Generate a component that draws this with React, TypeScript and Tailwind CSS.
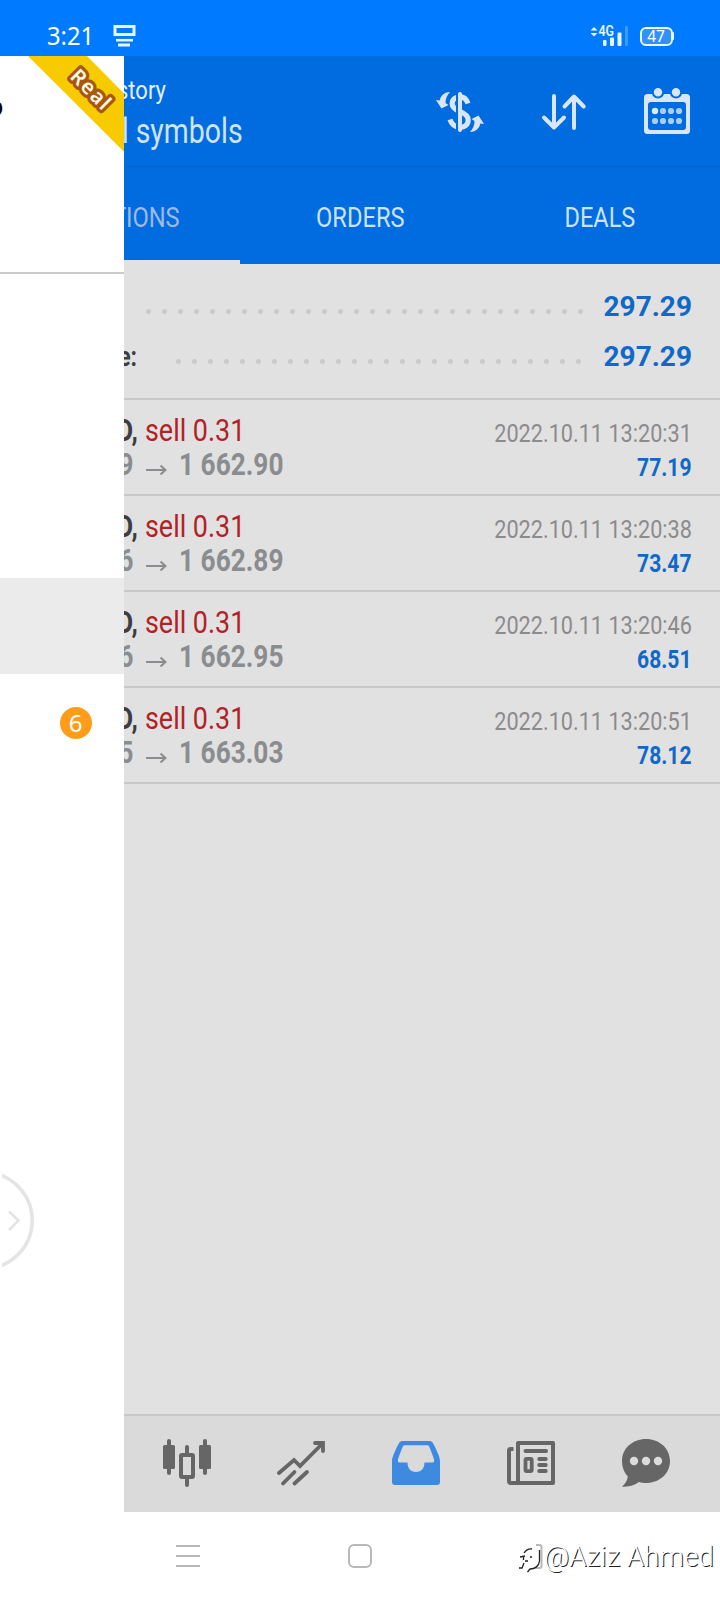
import React from "react";
import clsx from "clsx";

const deals = [
  { id: 1, open: "9", close: "1 662.90", time: "2022.10.11 13:20:31", profit: "77.19" },
  { id: 2, open: "6", close: "1 662.89", time: "2022.10.11 13:20:38", profit: "73.47" },
  { id: 3, open: "6", close: "1 662.95", time: "2022.10.11 13:20:46", profit: "68.51" },
  { id: 4, open: "5", close: "1 663.03", time: "2022.10.11 13:20:51", profit: "78.12" },
];

function StatusBar() {
  return (
    <header className="flex h-14 items-start bg-[#007aff] pt-[23px] pr-[46px] pl-[47px] text-white">
      <span className="h-6 w-[66px] origin-left scale-x-[0.95] font-['Noto_Sans'] text-[25px] leading-[25px] whitespace-nowrap">
        3:21
      </span>
      <svg className="mt-0.5 h-[22px] w-[23px]" viewBox="0 0 23 22" fill="none" stroke="#e8f4ff">
        <rect x="2" y="1.5" width="19" height="8" strokeWidth="3" />
        <path d="M3 15.2H20" strokeWidth="2.6" />
        <path d="M5 20H17" strokeWidth="3" />
      </svg>
      <div className="ml-auto flex items-start">
        <svg className="h-6 w-10" viewBox="0 0 40 24" fill="#e8f4ff">
          <path d="M2.5 7.5L6 4L9.5 7.5Z" />
          <path d="M2.5 10L6 13.5L9.5 10Z" />
          <text x="10.5" y="13" fontFamily="Roboto" fontWeight="600" fontSize="14" textLength="15.5" lengthAdjust="spacingAndGlyphs">
            4G
          </text>
          <rect x="15" y="17" width="3.5" height="6" rx="1" />
          <rect x="22" y="14.5" width="4" height="8.5" rx="1" />
          <rect x="29.5" y="9.5" width="4" height="13.5" rx="1" />
          <rect x="37" y="3" width="3" height="20" rx="1" fill="#3d9bff" />
        </svg>
        <div className="mt-[3.5px] ml-3 flex h-[19px] w-[33px] items-center justify-center rounded-[6px] border-2 border-[#e8f8ff] bg-[#3390f8] pt-px font-['Noto_Sans'] text-[15.5px] leading-none">
          47
        </div>
        <div className="mt-[9px] h-2 w-[1.5px] rounded-r bg-[#e8f8ff]" />
      </div>
    </header>
  );
}

function Drawer() {
  return (
    <aside className="relative w-[124px] shrink-0 overflow-hidden bg-white">
      <div className="relative h-[218px] border-b-2 border-[#cbcbcb]">
        <svg className="absolute top-0 left-0 h-[100px] w-[124px]" viewBox="0 0 124 100">
          <path d="M28 0H87L124 37.5V95.7Z" fill="#f7cb00" />
          <text
            x="91.5"
            y="41"
            transform="rotate(45 91.5 33.5)"
            textAnchor="middle"
            fontFamily="Noto Sans"
            fontSize="20.5"
            fontWeight="600"
            letterSpacing="1.5"
            fill="#fff8e6"
            stroke="#a9570b"
            strokeWidth="6.5"
            strokeLinejoin="round"
            paintOrder="stroke"
          >
            Real
          </text>
        </svg>
        <div className="flex w-[3px] justify-end overflow-hidden pt-[35px] text-[27px] leading-8 font-bold text-black">
          <span>o</span>
        </div>
      </div>
      <div className="mt-[304px] h-24 bg-[#ebebeb]" />
      <div className="flex h-24 items-center justify-end pt-0.5 pr-8">
        <span className="flex size-8 items-center justify-center rounded-full bg-[#ff9d1a] pr-px font-['Noto_Sans'] text-[24px] leading-none text-white">
          6
        </span>
      </div>
      <svg className="mt-[400px] ml-0.5 h-[100px] w-9" viewBox="2 1170 36 100" fill="none" stroke="#e4e4e4">
        <circle cx="-16" cy="1220.5" r="48.2" strokeWidth="3.6" />
        <path d="M9 1211.5L18.5 1220.5L9 1230" strokeWidth="2.6" />
      </svg>
    </aside>
  );
}

function ActionIcons() {
  return (
    <div className="ml-auto flex pt-8 text-[#d9e6f7]">
      <svg className="h-12 w-12" viewBox="0 0 48 48" fill="none" stroke="currentColor">
        <path
          d="M32 15.5C30.5 11 28 8.8 24 8.8C19 8.8 16.2 11.5 16.2 15.5C16.2 20 20 22 24 23.6C29.5 25.7 32.2 28 32.2 32C32.2 36.5 29 39.3 24 39.3C18.5 39.3 15.5 36 14 31.5"
          strokeWidth="5.2"
        />
        <path d="M21 4V44" stroke="#006ce0" strokeWidth="2" />
        <path d="M24 6V42" strokeWidth="4" strokeLinecap="round" />
        <g fill="currentColor" stroke="none">
          <path d="M14 4C7.5 4.3 4.5 8 3.8 12.5L0 12L5.5 20.5L12.5 17L9.5 15C9.5 10 11.5 7 14 4Z" />
          <path transform="rotate(180 24 24)" d="M14 4C7.5 4.3 4.5 8 3.8 12.5L0 12L5.5 20.5L12.5 17L9.5 15C9.5 10 11.5 7 14 4Z" />
        </g>
      </svg>
      <svg
        className="ml-[52px] h-12 w-[52px]"
        viewBox="0 0 52 48"
        fill="none"
        stroke="currentColor"
        strokeWidth="4"
        strokeLinecap="round"
        strokeLinejoin="round"
      >
        <path d="M18 8V39M8 29.5L18 39.5L28 29.5" />
        <path d="M38 40V9M28.5 18.5L38 8.5L47.7 18.5" />
      </svg>
      <svg className="ml-14 h-12 w-12" viewBox="644 88 48 48">
        <rect x="644" y="94" width="46" height="40" rx="3.5" fill="currentColor" />
        <rect x="648" y="102" width="38" height="28" rx="3" fill="#006ce0" />
        <g fill="currentColor" stroke="#006ce0" strokeWidth="2">
          <circle cx="658" cy="92.3" r="5.2" />
          <circle cx="676" cy="92.3" r="5.2" />
        </g>
        <g fill="#a9cdf6">
          <circle cx="655" cy="111" r="3.2" fill="#dcebfb" />
          <circle cx="663" cy="111" r="3.1" />
          <circle cx="671" cy="111" r="3.1" />
          <circle cx="679" cy="111" r="3.1" />
          <circle cx="655" cy="121" r="3.1" />
          <circle cx="663" cy="121" r="3.1" />
          <circle cx="671" cy="121" r="3.1" />
          <circle cx="679" cy="121" r="3.1" />
        </g>
      </svg>
    </div>
  );
}

function SummaryRow({ label, dots, wide }: { label: string; dots: number; wide?: boolean }) {
  return (
    <div className="flex h-[50px] items-center pr-7">
      <div className="flex w-[13px] shrink-0 justify-end overflow-hidden">
        <span className="origin-right scale-x-[0.82] text-[28px] font-bold whitespace-nowrap text-[#3c3e42]">{label}</span>
      </div>
      <div className={clsx("mt-2 flex shrink-0 gap-[11px]", wide ? "ml-[9px]" : "ml-[39px]")}>
        {Array.from({ length: dots }, (_, i) => (
          <span key={i} className="size-[5px] rounded-full bg-[#cacaca]" />
        ))}
      </div>
      <span className="ml-auto text-[28px] leading-8 font-bold text-[#1068c8]">297.29</span>
    </div>
  );
}

function BottomBar() {
  return (
    <div className="flex h-[98px] border-t-2 border-[#c8c8c8] bg-[#dadada] pt-[23px] pl-[39px] text-[#666]">
      <svg className="size-12" viewBox="0 0 48 48" fill="currentColor">
        <rect x="4" y="0" width="4" height="36" rx="2" />
        <rect x="0" y="6" width="12" height="24" rx="1.5" />
        <rect x="22" y="6" width="4" height="10" rx="2" />
        <rect x="22" y="38" width="4" height="10" rx="2" />
        <rect x="18" y="16" width="12" height="22" rx="1" fill="none" stroke="currentColor" strokeWidth="4" />
        <rect x="40" y="0" width="4" height="36" rx="2" />
        <rect x="36" y="6" width="12" height="24" rx="1.5" />
      </svg>
      <svg
        className="ml-[66px] size-12"
        viewBox="0 0 48 48"
        fill="none"
        stroke="currentColor"
        strokeWidth="3.8"
        strokeLinecap="round"
      >
        <path d="M2 34L17 21L23 27L45 5" />
        <path d="M38 4H46V12" />
        <path d="M6 44.5L17.5 33M17.5 44.5L30 33" />
      </svg>
      <svg className="ml-[67px] size-12" viewBox="0 0 48 48" fill="#3d8ae0">
        <path
          fillRule="evenodd"
          d="M10.5 2H37.5C39.5 2 40.5 3 41.5 5C45 12 48 18 48 22V43C48 45 47 46 45 46H3C1 46 0 45 0 43V22C0 18 3 12 6.5 5C7.5 3 8.5 2 10.5 2ZM13 6.2C12 6.2 11.3 6.6 10.8 7.6C9 12 7 17 6 20.5C5.6 22.3 6 23.5 7.5 23.5H15.5C15.5 29 18.5 33 24 33C29.5 33 32.5 29 32.5 23.5H40.5C42 23.5 42.4 22.3 42 20.5C41 17 39 12 37.2 7.6C36.7 6.6 36 6.2 35 6.2Z"
        />
      </svg>
      <svg className="ml-[67px] size-12" viewBox="0 0 48 48" fill="none" stroke="currentColor" strokeWidth="4">
        <path d="M11 4H46V44H11Z" strokeLinejoin="round" />
        <path d="M6.5 10H3.5Q2 10 2 12V42Q2 44 4 44H12" />
        <path d="M18.5 12H39" strokeLinecap="round" />
        <rect x="18.5" y="19.9" width="6.2" height="12.2" rx="1" strokeWidth="3.8" />
        <path d="M32.2 20H38.8M32.2 26H38.8M32.2 32H38.8" strokeLinecap="round" strokeWidth="3.8" />
      </svg>
      <svg className="ml-[67px] size-12" viewBox="0 0 48 48" fill="currentColor">
        <path d="M24 0C37.5 0 48 9.5 48 22C48 34.5 37.5 44 24 44C21.5 44 19 43.7 17 43C12 46.5 6 48 0 47.8C3.5 44.5 5.5 41 5.8 37.5C2 33.5 0 28 0 22C0 9.5 10.5 0 24 0Z" />
        <g fill="#dcdcdc">
          <circle cx="12" cy="22" r="4.2" />
          <circle cx="24" cy="22" r="4.2" />
          <circle cx="36" cy="22" r="4.2" />
        </g>
      </svg>
    </div>
  );
}

function SystemNav() {
  return (
    <footer className="flex h-[88px] items-start bg-white pl-[176px]">
      <div className="mt-[33px] flex w-6 flex-col gap-2">
        <span className="h-0.5 bg-[#b8b8b8]" />
        <span className="h-0.5 bg-[#b8b8b8]" />
        <span className="h-0.5 bg-[#b8b8b8]" />
      </div>
      <span className="mt-8 ml-[148px] size-6 rounded-[6px] border-2 border-[#b8b8b8]" />
      <div className="ml-[146px] flex pt-[27px]">
        <svg className="mt-0.5 h-9 w-[26px] shrink-0" viewBox="518 1541 26 36" fill="none">
          <path d="M536 1545H539.5Q541.5 1545 541.5 1547V1566Q541.5 1568 539.5 1568H535" stroke="#b8b8b8" strokeWidth="2" />
          <g stroke="#222" strokeWidth="1.3">
            <path d="M524 1553C526 1550 529 1548.5 532 1549" />
            <path d="M520 1557L525 1556M523.5 1556.5V1560M525 1561H528" />
            <path d="M524 1563L522 1568H519" />
            <path d="M539.5 1550V1561C539 1566 535 1569 530 1569L527.5 1572" />
            <path d="M530 1557H532" />
          </g>
        </svg>
        <span className="text-[27.5px] leading-9 font-light tracking-[0.15px] whitespace-nowrap text-white [text-shadow:1px_1px_0_#222]">
          @Aziz Ahmed
        </span>
      </div>
    </footer>
  );
}

export default function App() {
  return (
    <div className="flex h-[1600px] w-[720px] flex-col overflow-hidden bg-white font-[Roboto]">
      <StatusBar />

      <div className="flex h-[1456px]">
        <Drawer />

        <main className="flex w-[596px] flex-col overflow-hidden bg-[#e1e1e1]">
          <div className="flex h-[111px] border-b border-[#0063d2] bg-[#006ce0] pr-7">
            <div className="pt-[18px]">
              <div className="flex w-[42px] justify-end overflow-hidden text-[26.5px] leading-8 text-[#e4effb]">
                <span className="origin-right scale-x-[0.83]">story</span>
              </div>
              <div className="flex w-[119px] justify-end overflow-hidden text-[34.5px] leading-[50px] whitespace-nowrap text-[#cfe4fa]">
                <span className="origin-right scale-x-[0.825]">l symbols</span>
              </div>
            </div>
            <ActionIcons />
          </div>

          <nav className="flex h-[97px] bg-[#006ce0] text-[28.5px] leading-[101px] text-[#cde3fa]">
            <div className="flex w-[116px] justify-end overflow-hidden border-b-4 border-[#e1e1e1] pr-[60px] text-[#9fb9e0]">
              <span className="origin-right scale-x-[0.83]">TIONS</span>
            </div>
            <div className="flex h-[93px] w-60 justify-center">
              <span className="scale-x-[0.83]">ORDERS</span>
            </div>
            <div className="flex h-[93px] w-60 justify-center">
              <span className="scale-x-[0.825]">DEALS</span>
            </div>
          </nav>

          <section className="h-[136px] border-b-2 border-[#c8c8c8] pt-[18px]">
            <SummaryRow label="" dots={28} wide />
            <SummaryRow label="e:" dots={26} />
          </section>

          {deals.map((deal) => (
            <div key={deal.id} className="flex h-24 justify-between border-b-2 border-[#c8c8c8] pt-[13px] pr-7">
              <div className="text-[32px] leading-[34px] whitespace-nowrap">
                <div className="flex h-[34px]">
                  <div className="flex w-[14px] justify-end overflow-hidden font-bold text-[#3c3e42]">
                    <span className="origin-right scale-x-[0.8]">D,</span>
                  </div>
                  <span className="ml-[7px] origin-left scale-x-[0.84] text-[#b12226]">sell 0.31</span>
                </div>
                <div className="flex h-[34px] font-bold text-[#8b8c90]">
                  <div className="flex w-[9px] justify-end overflow-hidden">
                    <span className="origin-right scale-x-[0.8]">{deal.open}</span>
                  </div>
                  <svg className="mt-[17px] ml-[13px] h-3 w-[21px]" viewBox="0 0 21 12" fill="none" stroke="currentColor" strokeWidth="2">
                    <path d="M0 6H19.5M14.5 1.5L19.5 6L14.5 10.5" />
                  </svg>
                  <span className="ml-[12px] origin-left scale-x-[0.82]">{deal.close}</span>
                </div>
              </div>
              <div className="flex flex-col items-end pt-[3px] text-[26.5px] leading-[34px] whitespace-nowrap">
                <span className="origin-right scale-x-[0.817] text-[#8b8b8d]">{deal.time}</span>
                <span className="origin-right scale-x-[0.795] font-bold text-[#1068c8]">{deal.profit}</span>
              </div>
            </div>
          ))}

          <div className="flex-1" />
          <BottomBar />
        </main>
      </div>

      <SystemNav />
    </div>
  );
}
